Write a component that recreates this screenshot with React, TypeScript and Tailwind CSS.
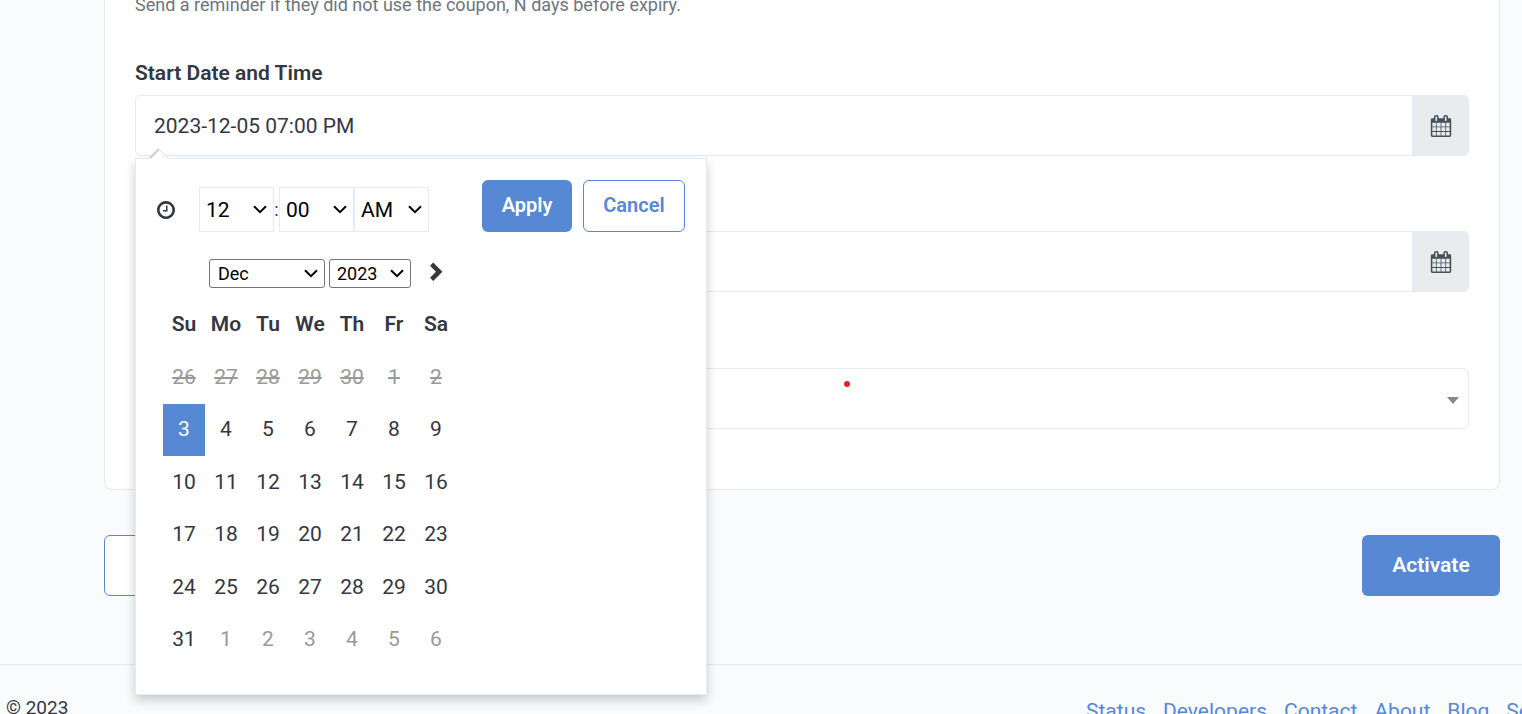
import { useState } from "react";
import type { ReactNode } from "react";

const weekdays = ["Su", "Mo", "Tu", "We", "Th", "Fr", "Sa"];

const weeks = [
  [26, 27, 28, 29, 30, 1, 2],
  [3, 4, 5, 6, 7, 8, 9],
  [10, 11, 12, 13, 14, 15, 16],
  [17, 18, 19, 20, 21, 22, 23],
  [24, 25, 26, 27, 28, 29, 30],
  [31, 1, 2, 3, 4, 5, 6],
];

const footerLinks = ["Status", "Developers", "Contact", "About", "Blog", "Security"];

function CalendarIcon() {
  return (
    <svg viewBox="0 0 1792 1792" className="size-[22px]" fill="currentColor" aria-hidden="true">
      <path d="M192 1664h288v-288h-288v288zM544 1664h320v-288h-320v288zM192 1312h288v-320h-288v320zM544 1312h320v-320h-320v320zM192 928h288v-288h-288v288zM928 1664h320v-288h-320v288zM544 928h320v-288h-320v288zM1312 1664h288v-288h-288v288zM928 1312h320v-320h-320v320zM576 448v-288q0-13-9.5-22.5t-22.5-9.5h-64q-13 0-22.5 9.5t-9.5 22.5v288q0 13 9.5 22.5t22.5 9.5h64q13 0 22.5-9.5t9.5-22.5zM1312 1312h288v-320h-288v320zM928 928h320v-288h-320v288zM1312 928h288v-288h-288v288zM1344 448v-288q0-13-9.5-22.5t-22.5-9.5h-64q-13 0-22.5 9.5t-9.5 22.5v288q0 13 9.5 22.5t22.5 9.5h64q13 0 22.5-9.5t9.5-22.5zM1728 384v1280q0 52-38 90t-90 38h-1408q-52 0-90-38t-38-90v-1280q0-52 38-90t90-38h128v-96q0-66 47-113t113-47h64q66 0 113 47t47 113v96h384v-96q0-66 47-113t113-47h64q66 0 113 47t47 113v96h128q52 0 90 38t38 90z" />
    </svg>
  );
}

function ClockIcon() {
  return (
    <svg viewBox="0 128 1536 1536" className="size-[18px]" fill="currentColor" aria-hidden="true">
      <path d="M896 544v448q0 14-9 23t-23 9h-320q-14 0-23-9t-9-23v-64q0-14 9-23t23-9h224v-352q0-14 9-23t23-9h64q14 0 23 9t9 23zm416 352q0-148-73-273t-198-198-273-73-273 73-198 198-73 273 73 273 198 198 273 73 273-73 198-198 73-273zm224 0q0 209-103 385.5t-279.5 279.5-385.5 103-385.5-103-279.5-279.5-103-385.5 103-385.5 279.5-279.5 385.5-103 385.5 103 279.5 279.5 103 385.5z" />
    </svg>
  );
}

type PickerSelectProps = {
  label: string;
  options: string[];
  className: string;
  wrapper: string;
};

function PickerSelect({ label, options, className, wrapper }: PickerSelectProps) {
  return (
    <div className={`relative ${wrapper}`}>
      <select
        aria-label={label}
        className={`block size-full appearance-none bg-white text-black outline-none ${className}`}
      >
        {options.map((option) => (
          <option key={option}>{option}</option>
        ))}
      </select>
      <svg
        viewBox="0 0 14 9"
        className="pointer-events-none absolute inset-y-0 right-[7px] my-auto h-[9px] w-[14px]"
        fill="none"
        stroke="black"
        strokeWidth="2"
        aria-hidden="true"
      >
        <path d="M1 1.2 7 7.2 13 1.2" />
      </svg>
    </div>
  );
}

type DateFieldProps = {
  id: string;
  label?: string;
  value: string;
  children?: ReactNode;
};

function DateField({ id, label, value, children }: DateFieldProps) {
  const [date, setDate] = useState(value);

  return (
    <div className="relative flex h-[61px]">
      <input
        id={id}
        type="text"
        aria-label={label}
        value={date}
        onChange={(e) => setDate(e.target.value)}
        className="min-w-0 flex-1 rounded-l-md border border-[#e3ebf6] bg-white px-[18px] pt-[2px] text-[21px] outline-none"
      />
      <button
        type="button"
        aria-label="Open calendar"
        className="flex w-14 items-center justify-center rounded-r-md border border-l-0 border-[#e3ebf6] bg-[#e8ecee] text-[#495057]"
      >
        <CalendarIcon />
      </button>
      {children}
    </div>
  );
}

function DatePicker() {
  return (
    <div className="absolute top-[63px] left-0 z-10 h-[537px] w-[572px] border border-[#e3ebf6] bg-white p-[21px] shadow-[0_5px_10px_rgba(0,0,0,0.2)]">
      {/* Little arrow pointing at the input */}
      <svg viewBox="0 0 20 11" className="absolute -top-[11px] left-[13px] h-[11px] w-5" aria-hidden="true">
        <path d="M0 11 10 1 20 11z" fill="white" />
        <path d="M1 10 10 1" stroke="#ccc" strokeWidth="2" />
        <path d="M10 1 19 10" stroke="#ddd" />
      </svg>

      <div className="flex items-start">
        <div className="mt-[7px] flex h-[45px] items-center text-[21px]">
          <ClockIcon />
          <PickerSelect
            label="Hour"
            options={["12", "1", "2", "3", "4", "5", "6", "7", "8", "9", "10", "11"]}
            wrapper="ml-6 h-full w-[75px]"
            className="border border-[#e3ebf6] pt-[2px] pl-[6px]"
          />
          <span className="w-[5px] text-center text-lg">:</span>
          <PickerSelect
            label="Minute"
            options={["00", "15", "30", "45"]}
            wrapper="h-full w-[75px]"
            className="border border-[#e3ebf6] pt-[2px] pl-[6px]"
          />
          <PickerSelect
            label="AM or PM"
            options={["AM", "PM"]}
            wrapper="h-full w-[75px]"
            className="border border-[#e3ebf6] pt-[2px] pl-[6px]"
          />
        </div>
        <div className="ml-auto flex gap-[11px] text-xl font-semibold">
          <button type="button" className="h-[52px] w-[90px] rounded-md bg-[#5688d4] pb-[2px] text-white">
            Apply
          </button>
          <button
            type="button"
            className="h-[52px] w-[102px] rounded-md border border-[#5688d4] bg-white pb-[2px] text-[#5688d4]"
          >
            Cancel
          </button>
        </div>
      </div>

      <div className="mt-[27px] ml-[52px] flex h-[29px] items-start gap-1 text-lg">
        <PickerSelect
          label="Month"
          options={["Dec"]}
          wrapper="h-full w-[116px]"
          className="rounded-[3px] border border-[#767676] pl-2"
        />
        <PickerSelect
          label="Year"
          options={["2023", "2024"]}
          wrapper="h-full w-[82px]"
          className="rounded-[3px] border border-[#767676] pl-[7px]"
        />
        <button type="button" aria-label="Next month" className="mt-[3px] ml-[14px]">
          <svg viewBox="0 0 14 20" className="h-5 w-[14px]" fill="#343741" aria-hidden="true">
            <path d="M4.2.6 13.4 9.8 4.2 19 1 15.8 7 9.8 1 3.8z" />
          </svg>
        </button>
      </div>

      <table className="mt-[11px] ml-[6px] w-[294px] table-fixed border-collapse text-center text-[21px]">
        <thead>
          <tr className="h-[52px]">
            {weekdays.map((day) => (
              <th key={day} className="p-0 font-semibold">
                {day}
              </th>
            ))}
          </tr>
        </thead>
        <tbody>
          {weeks.map((week, row) => (
            <tr key={row} className="odd:h-[53px] even:h-[52px]">
              {week.map((day, col) => {
                const past = row === 0;
                const next = row === 5 && col > 0;
                const active = row === 1 && col === 0;
                return (
                  <td
                    key={col}
                    className={`p-0 ${past ? "text-[#999] line-through" : ""} ${next ? "text-[#999]" : ""} ${
                      active ? "bg-[#5688d4] text-white" : ""
                    }`}
                  >
                    {day}
                  </td>
                );
              })}
            </tr>
          ))}
        </tbody>
      </table>
    </div>
  );
}

export default function App() {
  return (
    <div className="h-screen overflow-hidden bg-[#fafbfd] font-['Roboto',sans-serif] text-[#343741]">
      <main className="mr-[22px] ml-[104px]">
        <section className="rounded-b-lg border border-t-0 border-[#e3ebf6] bg-white px-[30px] pb-[60px]">
          <p className="-mt-2 mb-10 text-lg leading-[26px] text-[#6e757c]">
            Send a reminder if they did not use the coupon, N days before expiry.
          </p>

          <label htmlFor="start-date" className="mb-[7px] block text-[21px] leading-[30px] font-semibold">
            Start Date and Time
          </label>
          <DateField id="start-date" value="2023-12-05 07:00 PM">
            <DatePicker />
          </DateField>

          <div className="mt-[75px]">
            <DateField id="end-date" label="End Date and Time" value="" />
          </div>

          <div className="relative mt-[76px] h-[61px]">
            <select
              aria-label="Time zone"
              className="size-full appearance-none rounded-md border border-[#e3ebf6] bg-white outline-none"
            />
            <svg
              viewBox="0 0 12 7"
              className="pointer-events-none absolute top-[29px] right-[10px] h-[7px] w-3"
              fill="#888"
              aria-hidden="true"
            >
              <path d="M0 0h12L6 7z" />
            </svg>
            <span className="absolute top-[13px] left-[709px] size-[6px] rounded-full bg-[#ec1c24]" />
          </div>
        </section>

        <div className="mt-[45px] flex justify-between">
          <button
            type="button"
            aria-label="Back"
            className="h-[61px] w-[138px] rounded-md border border-[#5688d4] bg-white"
          />
          <button
            type="button"
            className="h-[61px] w-[138px] rounded-md bg-[#5688d4] text-[21px] font-semibold text-white"
          >
            Activate
          </button>
        </div>
      </main>

      <footer className="mt-[68px] flex justify-between border-t border-[#e3ebf6] pt-[30px]">
        <span className="pl-[6px] text-[19px] leading-[26px]">© 2023</span>
        <nav className="flex w-[436px] gap-[17px] text-[21px] leading-8 text-[#5688d4]">
          {footerLinks.map((link) => (
            <a key={link} href="#">
              {link}
            </a>
          ))}
        </nav>
      </footer>
    </div>
  );
}
